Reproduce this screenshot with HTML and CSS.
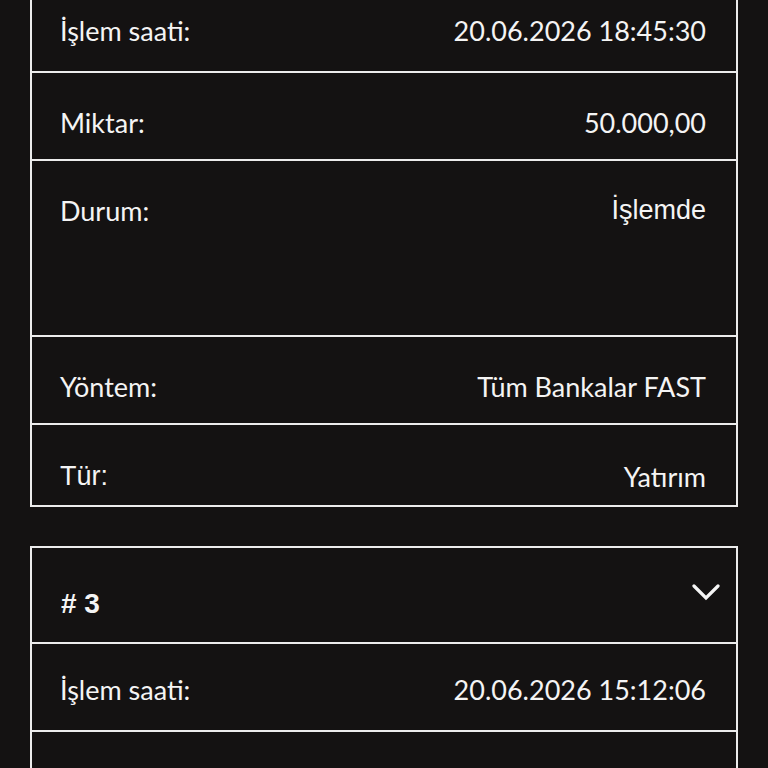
FILE: index.html
```html
<!DOCTYPE html>
<html lang="tr">
<head>
<meta charset="UTF-8" />
<meta name="viewport" content="width=device-width, initial-scale=1" />
<title>İşlem Geçmişi</title>
<link rel="stylesheet" href="styles.css">
</head>
<body>
<main class="history">
  <section class="tx-card">
    <div class="tx-header">
      <span class="tx-title"># 2</span>
      <svg class="tx-chevron" width="28" height="20" viewBox="0 0 28 20"><polyline points="2,4 14,16 26,4" /></svg>
    </div>
    <div class="tx-row first">
      <span class="tx-label">İşlem saati:</span>
      <span class="tx-value">20.06.2026 18:45:30</span>
    </div>
    <div class="tx-row">
      <span class="tx-label">Miktar:</span>
      <span class="tx-value">50.000,00</span>
    </div>
    <div class="tx-row tall">
      <span class="tx-label">Durum:</span>
      <span class="tx-value alt-font">İşlemde</span>
    </div>
    <div class="tx-row">
      <span class="tx-label">Yöntem:</span>
      <span class="tx-value">Tüm Bankalar FAST</span>
    </div>
    <div class="tx-row last">
      <span class="tx-label alt-font">Tür:</span>
      <span class="tx-value">Yatırım</span>
    </div>
  </section>

  <section class="tx-card">
    <div class="tx-header">
      <span class="tx-title"># 3</span>
      <svg class="tx-chevron" width="28" height="20" viewBox="0 0 28 20"><polyline points="2,4 14,16 26,4" /></svg>
    </div>
    <div class="tx-row first">
      <span class="tx-label">İşlem saati:</span>
      <span class="tx-value">20.06.2026 15:12:06</span>
    </div>
    <div class="tx-row">
      <span class="tx-label">Miktar:</span>
      <span class="tx-value">25.000,00</span>
    </div>
  </section>
</main>
</body>
</html>
```

FILE: styles.css
```css
body, html {
  margin: 0; padding: 0; height: 100%; overflow: hidden;
  background: #141212; color: #f4f4f4;
  font-family: Lato, "Liberation Sans", sans-serif;
}
.history {
  display: flex; flex-direction: column; gap: 39px;
  padding: 0 30px; margin-top: -113px;
}
.tx-card {
  border: 2px solid #ececec;
}
.tx-header {
  display: flex; justify-content: space-between; align-items: flex-start;
  padding: 31px 30px 23px 29px;
}
.tx-title {
  font-family: "Liberation Sans", Arial, sans-serif; font-weight: bold;
  font-size: 28px; line-height: 31px; padding-top: 9px;
}
.tx-chevron {
  margin-top: 3px; margin-right: -14px;
}
.tx-chevron polyline {
  fill: none; stroke: #f5f5f5; stroke-width: 3.2; stroke-linecap: round;
}
.tx-row {
  display: flex; justify-content: space-between; align-items: flex-start;
  border-top: 2px solid #ececec;
  padding: 34px 30px 21px 28px;
  font-size: 27px; line-height: 31px;
}
.tx-row.first {
  padding-top: 30px; padding-bottom: 25px;
}
.tx-row.tall {
  padding-bottom: 109px;
}
.tx-row.last {
  padding-top: 36px; padding-bottom: 13px;
}
.alt-font {
  font-family: "Liberation Sans", Arial, sans-serif;
}
```
